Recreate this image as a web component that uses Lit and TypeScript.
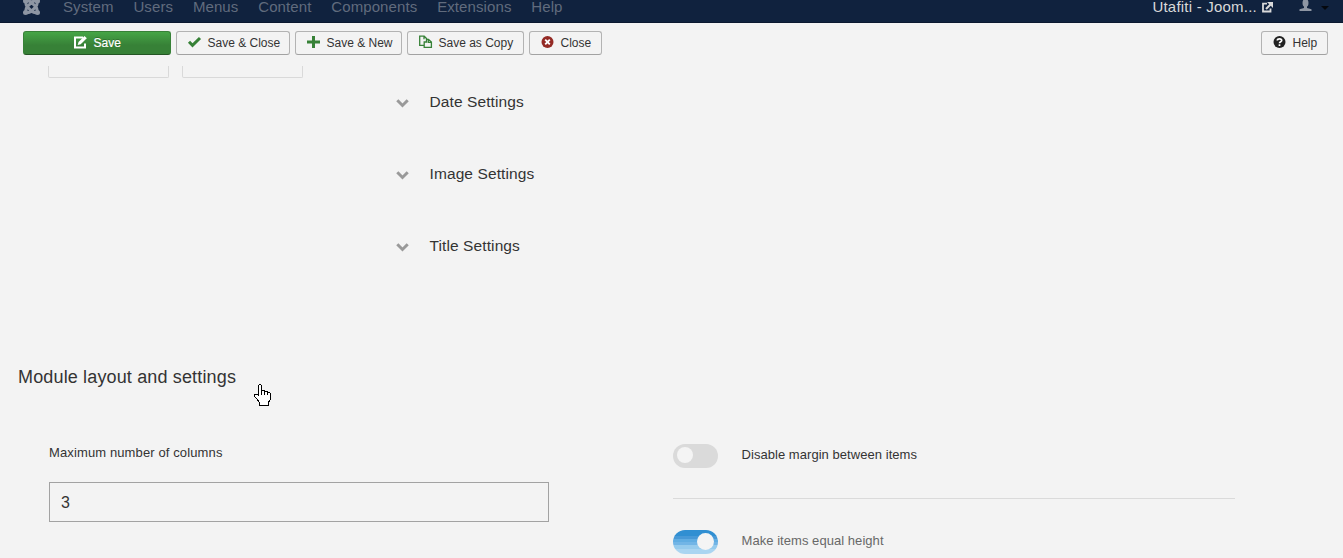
import { LitElement, html, css, svg } from "lit";
import { customElement } from "lit/decorators.js";

const icons = {
  edit: svg`<path d="M9 1.500H1V11.500h10V7.500" fill="none" stroke="currentColor" stroke-width="2"/><path d="M3.700 9l.8-3L10.500 0l2.300 2.300L6.700 8.300z" fill="currentColor"/>`,
  check: svg`<path d="M1 5.800L4.500 9.300 12 2" fill="none" stroke="currentColor" stroke-width="3"/>`,
  plus: svg`<path d="M6.500 0v12M0 6h13" fill="none" stroke="currentColor" stroke-width="3"/>`,
  copy: svg`<path d="M5 9.300H.7V.200H5.200L8 3M5 .200V3.300" fill="none" stroke="currentColor" stroke-width="1.300"/><path d="M5.200 9.300V11.400H12.400V6L9.500 3.300H7.500V6H5.200V9.300M9.300 3.500V6.300h3" fill="none" stroke="currentColor" stroke-width="1.300"/>`,
  close: svg`<circle cx="6.500" cy="6" r="6" fill="currentColor"/><path d="M4.200 3.700l4.600 4.600M8.800 3.700L4.200 8.300" stroke="#fff" stroke-width="1.900"/>`,
  help: svg`<circle cx="6.500" cy="6" r="6" fill="currentColor"/><path d="M4.300 4.500C4.500 2.300 8.700 2.300 8.700 4.500 8.700 5.800 6.500 5.700 6.500 7.300M6.500 8.300V10" fill="none" stroke="#fff" stroke-width="1.700"/>`,
};

@customElement("app-root")
export class AppRoot extends LitElement {
  static styles = css`
    :host { display: block; height: 558px; overflow: hidden; background: #f3f3f3; color: #333;
      font-family: "Liberation Sans", Arial, sans-serif; }
    * { box-sizing: border-box; }
    svg { display: block; flex: none; overflow: visible; }
    .nav { height: 23px; background: #10223e; border-bottom: 1px solid #0b1830; display: flex;
      align-items: flex-start; padding-left: 23px; color: #606b7d; font-size: 15px; line-height: 13px; letter-spacing: .1px; }
    .nav span { white-space: nowrap; }
    .logo { margin-right: 23px; }
    .menu { display: flex; gap: 19.800px; }
    .site { margin-left: auto; color: #d9d9d9; letter-spacing: .220px; }
    .ext { margin: 2px 26px 0 4.500px; }
    .user { margin-right: 9px; }
    .caret { margin: 6px 14.500px 0 0; }
    .bar { display: flex; gap: 5px; padding: 8px 15px 0 23px; height: 43px; }
    .btn { height: 24px; border: 1px solid #b3b3b3; border-bottom-color: #a2a2a2; border-radius: 3px;
      background: #f3f3f3; font: 12px/22px "Liberation Sans", Arial, sans-serif; color: #333; display: flex; padding: 0 0 0 11px; white-space: nowrap; }
    .btn svg { margin: 4px 6.500px 0 0; }
    .btn b { font-weight: 400; }
    .save { width: 148px; padding-left: 50px; color: #fff; border-color: #378137; border-bottom-color: #245524;
      background: linear-gradient(#46a546, #378137 60%); text-shadow: 0 -1px 0 rgba(0,0,0,.25); -webkit-text-stroke: .2px #fff; }
    .saveclose { width: 114px; } .savenew { width: 107px; } .savecopy { width: 117px; } .closebtn { width: 73px; }
    .helpbtn { width: 67px; margin-left: auto; }
    .green { color: #378137; } .red { color: #942a25; } .dark { color: #222; }
    .tabs { display: flex; gap: 13px; padding-left: 48px; height: 12px; }
    .tab { width: 121px; border: 1px solid #d9d9d9; border-top: 0; border-radius: 0 0 2px 2px; }
    .sections { padding: 6px 0 0 396px; }
    .section { display: flex; height: 72px; font-size: 15.500px; letter-spacing: .1px; line-height: 36px; }
    .section svg { margin: 15px 20.500px 0 0; }
    h2 { margin: 65px 0 0 18px; font-size: 18px; letter-spacing: .150px; line-height: 24px; font-weight: 400; }
    .form { display: flex; padding: 55px 0 0 49px; font-size: 13px; letter-spacing: .120px; }
    .left { width: 500px; }
    .left label { display: block; line-height: 18px; }
    .field { display: block; width: 500px; height: 40px; margin-top: 20px; border: 1px solid #a2a2a2; padding: 0 11px;
      font-size: 16px; line-height: 39px; }
    .right { width: 562px; margin-left: 124px; letter-spacing: .050px; }
    .row { display: flex; line-height: 22px; }
    .row + .row { margin-top: 30px; padding-top: 31px; border-top: 1px solid #dadada; color: #686868; }
    .toggle { width: 45px; height: 24px; border-radius: 12px; background: #dadada; padding: 3px 4px; margin-right: 23.500px; flex: none; }
    .toggle i { display: block; width: 16px; height: 16px; border-radius: 50%; background: #f4f4f4; }
    .on { background: linear-gradient(#308fd2 0 25%, #4799d7 25% 38%, #61ade2 38% 48%, #72b5e6 48% 62%, #96cbed 62% 80%, #aad5f1 80%); padding: 3px 4px; }
    .on i { margin-left: 20px; width: 17px; height: 17px; }
    .cursor { position: absolute; left: 254px; top: 384px; }
  `;

  button(kind: string, icon: unknown, tone: string, label: string) {
    return html`<button class="btn ${kind}"><svg class=${tone} width="13" height="13">${icon}</svg><b>${label}</b></button>`;
  }

  render() {
    return html`
      <div class="nav">
        <svg class="logo" width="17" height="16" fill="none" stroke="#8e96a3" stroke-width="3">
          <path d="M3 12V9.500Q3 8 4.500 6.500L9 2Q11 .5 14 1.500M3 1V4Q3 5.500 4.500 7L9 11.500Q11 13 14 12.500M14 1V4Q14 5.500 12.500 7L8 11.500Q6 13 3 12.500M14 12V9.500Q14 8 12.500 6.500L8 2Q6 .5 3 1.500"/>
          <g fill="#8e96a3" stroke="none"><circle cx="2.500" cy="1" r="2.500"/><circle cx="14.500" cy="1" r="2.500"/><circle cx="2.500" cy="12.500" r="2.500"/><circle cx="14.500" cy="12.500" r="2.500"/></g>
        </svg>
        <div class="menu">${["System", "Users", "Menus", "Content", "Components", "Extensions", "Help"].map((t) => html`<span>${t}</span>`)}</div>
        <span class="site">Utafiti - Joom...</span>
        <svg class="ext" width="11" height="11" fill="none" stroke="#d9d9d9"><path d="M5 1.700H1V9.500h7.500V6.500" stroke-width="1.800"/><path d="M4 7l5-5" stroke-width="2.200"/><path d="M5 0H11v6z" fill="#d9d9d9" stroke="none"/></svg>
        <svg class="user" width="13" height="12" fill="#8e96a3"><ellipse cx="6.500" cy="3" rx="3" ry="4"/><path d="M5 6h3v2l4.500 1.200V11H.5V9.200L5 8z"/></svg>
        <svg class="caret" width="8" height="4"><path d="M0 0h8L4 4z" fill="#05080e"/></svg>
      </div>
      <div class="bar">
        ${this.button("save", icons.edit, "", "Save")}
        ${this.button("saveclose", icons.check, "green", "Save & Close")}
        ${this.button("savenew", icons.plus, "green", "Save & New")}
        ${this.button("savecopy", icons.copy, "green", "Save as Copy")}
        ${this.button("closebtn", icons.close, "red", "Close")}
        ${this.button("helpbtn", icons.help, "dark", "Help")}
      </div>
      <div class="tabs"><div class="tab"></div><div class="tab"></div></div>
      <div class="sections">
        ${["Date Settings", "Image Settings", "Title Settings"].map((t) => html`<div class="section">
          <svg width="13" height="9"><path d="M1.300 1.300L6.500 6.500l5.200-5.200" fill="none" stroke="#999" stroke-width="3"/></svg><span>${t}</span></div>`)}
      </div>
      <h2>Module layout and settings</h2>
      <div class="form">
        <div class="left"><label>Maximum number of columns</label><div class="field">3</div></div>
        <div class="right">
          <div class="row"><div class="toggle"><i></i></div><span>Disable margin between items</span></div>
          <div class="row"><div class="toggle on"><i></i></div><span>Make items equal height</span></div>
        </div>
      </div>
      <svg class="cursor" width="18" height="23" fill="#fff" stroke="#000" stroke-width="1.100" shape-rendering="crispEdges">
        <path d="M5.500 21.500V18.500L3.500 15.500L.5 12.500V10.500H3.500L4.500 11.500V1.500L5.500 .5H6.500L7.500 1.500V6.500H10.500V7.500H13.500V8.500H15.500L16.500 9.500V15.500L14.500 18.500V21.500ZM7.500 6V11M10.500 7V11M13.500 8V11"/>
      </svg>
    `;
  }
}
